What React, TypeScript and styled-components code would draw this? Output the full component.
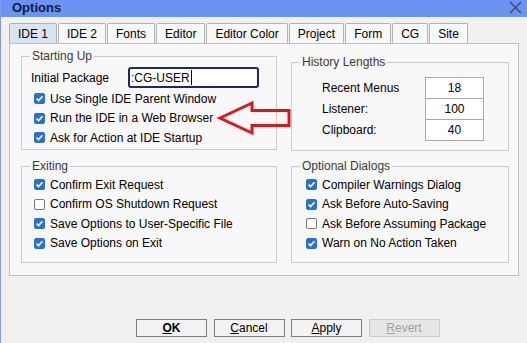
import React from "react";
import styled, { createGlobalStyle } from "styled-components";

const GlobalStyle = createGlobalStyle`
  html, body { margin: 0; padding: 0; background: #f0f0f0; }
  body { font-family: "Liberation Sans", Arial, sans-serif; font-size: 12px; color: #000; }
  * { box-sizing: border-box; }
`;

const Window = styled.div`
  position: relative;
  width: 527px;
  height: 343px;
  border-left: 1px solid #7d9cf0;
  background: #f0f0f0;
  display: flex;
  flex-direction: column;
  overflow: hidden;
`;

const TitleBar = styled.div`
  height: 17px;
  background: #6c93f1;
  display: flex;
  align-items: center;
  padding: 0 5px 0 11px;
`;

const Title = styled.span`
  font-weight: bold;
  font-size: 13px;
  color: #101d3c;
  line-height: 17px;
  margin-top: -3px;
`;

const CloseIcon = styled.svg`
  margin-left: auto;
  margin-top: -3px;
`;

const Body = styled.div`
  padding: 6px 0 0 8px;
`;

const TabBar = styled.div`
  display: flex;
  gap: 1px;
  height: 20px;
`;

const Tab = styled.div<{ $active?: boolean }>`
  height: 20px;
  padding: 0 8px;
  border: 1px solid #b3b3b3;
  border-bottom: none;
  border-radius: 2px 2px 0 0;
  background: ${(p) => (p.$active ? "#d7e4f1" : "#f8f8f8")};
  display: flex;
  align-items: center;
  justify-content: center;
  line-height: 14px;
  white-space: nowrap;
`;

const Panel = styled.div`
  width: 510px;
  height: 233px;
  border: 1px solid #c2c2c2;
  background: #f8f8f8;
  padding: 5px 0 0 11px;
  display: grid;
  grid-template-columns: 256px 218px;
  grid-template-rows: 102px auto;
  column-gap: 14px;
  row-gap: 8px;
  align-items: start;
`;

const Group = styled.fieldset<{ $offset?: number }>`
  margin: ${(p) => p.$offset ?? 0}px 0 0 0;
  padding: 0;
  border: 1px solid #c9ccd2;
  min-width: 0;
`;

const Legend = styled.legend`
  margin-left: 8px;
  padding: 0 2px;
  line-height: 14px;
  font-size: 12px;
  color: #3a3a3a;
`;

const GroupContent = styled.div<{ $pt: number; $pb: number; $pl: number }>`
  padding: ${(p) => `${p.$pt}px 0 ${p.$pb}px ${p.$pl}px`};
  display: flex;
  flex-direction: column;
`;

const InputRow = styled.div`
  height: 23px;
  display: flex;
  align-items: center;
  margin-left: -3px;
`;

const FieldLabel = styled.span`
  width: 97px;
  white-space: nowrap;
`;

const TextBox = styled.div`
  width: 131px;
  height: 21px;
  border: 2px solid #1c2868;
  border-radius: 3px;
  background: #fff;
  display: flex;
  align-items: center;
  padding-left: 1px;
  line-height: 14px;
`;

const Caret = styled.span`
  display: inline-block;
  width: 1px;
  height: 15px;
  background: #000;
  margin-left: 1px;
`;

const CheckRow = styled.label`
  height: 19.5px;
  display: flex;
  align-items: center;
  white-space: nowrap;
  line-height: 14px;
`;

const Box = styled.span<{ $checked: boolean }>`
  width: 11px;
  height: 11px;
  border-radius: 2px;
  margin-right: 5px;
  flex: none;
  display: flex;
  align-items: center;
  justify-content: center;
  background: ${(p) => (p.$checked ? "#2a6fd6" : "#ffffff")};
  border: 1px solid ${(p) => (p.$checked ? "#2a6fd6" : "#7a7a7a")};
`;

const HistoryGrid = styled.div`
  display: grid;
  grid-template-columns: 103px 59px;
  grid-auto-rows: 21px;
`;

const HistLabel = styled.span`
  align-self: center;
  white-space: nowrap;
  line-height: 14px;
`;

const ValueCell = styled.div`
  height: 22px;
  border: 1px solid #a9a9a9;
  background: #fff;
  display: flex;
  align-items: center;
  justify-content: center;
  line-height: 14px;
`;

const ButtonRow = styled.div`
  display: flex;
  gap: 6.5px;
  margin-top: 43px;
  padding-left: 135px;
`;

const Button = styled.div<{ $disabled?: boolean; $default?: boolean }>`
  width: 71px;
  height: 18px;
  border: 1px solid ${(p) => (p.$disabled ? "#cbcbcb" : "#7f7f7f")};
  background: ${(p) => (p.$disabled ? "#e6e6e6" : "#f3f3f3")};
  color: ${(p) => (p.$disabled ? "#a0a0a0" : "#000")};
  font-weight: ${(p) => (p.$default ? "bold" : "normal")};
  display: flex;
  align-items: center;
  justify-content: center;
  line-height: 14px;
  u { text-decoration-thickness: 1px; text-underline-offset: 1px; }
`;

const ArrowSvg = styled.svg`
  position: absolute;
  left: 213px;
  top: 98px;
`;

const Check = ({ checked, label }: { checked: boolean; label: string }) => (
  <CheckRow>
    <Box $checked={checked}>
      {checked && (
        <svg width="9" height="9" viewBox="0 0 9 9">
          <path d="M1.6 4.6 L3.6 6.6 L7.5 2.2" fill="none" stroke="#fff" strokeWidth="1.6" />
        </svg>
      )}
    </Box>
    {label}
  </CheckRow>
);

const tabs = ["IDE 1", "IDE 2", "Fonts", "Editor", "Editor Color", "Project", "Form", "CG", "Site"];

const history = [
  { label: "Recent Menus", value: "18" },
  { label: "Listener:", value: "100" },
  { label: "Clipboard:", value: "40" },
];

export default function App() {
  return (
    <>
      <GlobalStyle />
      <Window>
        <TitleBar>
          <Title>Options</Title>
          <CloseIcon width="13" height="13" viewBox="0 0 13 13">
            <path d="M1 1 L12 12 M12 1 L1 12" stroke="#3b4662" strokeWidth="1.4" fill="none" />
          </CloseIcon>
        </TitleBar>
        <Body>
          <TabBar>
            {tabs.map((t, i) => (
              <Tab key={t} $active={i === 0}>
                {t}
              </Tab>
            ))}
          </TabBar>
          <Panel>
            <Group>
              <Legend>Starting Up</Legend>
              <GroupContent $pt={3} $pb={1} $pl={12}>
                <InputRow>
                  <FieldLabel>Initial Package</FieldLabel>
                  <TextBox>
                    :CG-USER
                    <Caret />
                  </TextBox>
                </InputRow>
                <Check checked label="Use Single IDE Parent Window" />
                <Check checked label="Run the IDE in a Web Browser" />
                <Check checked label="Ask for Action at IDE Startup" />
              </GroupContent>
            </Group>
            <Group $offset={6}>
              <Legend>History Lengths</Legend>
              <GroupContent $pt={8} $pb={10} $pl={30}>
                <HistoryGrid>
                  {history.map((h) => (
                    <React.Fragment key={h.label}>
                      <HistLabel>{h.label}</HistLabel>
                      <ValueCell>{h.value}</ValueCell>
                    </React.Fragment>
                  ))}
                </HistoryGrid>
              </GroupContent>
            </Group>
            <Group>
              <Legend>Exiting</Legend>
              <GroupContent $pt={2} $pb={9} $pl={12}>
                <Check checked label="Confirm Exit Request" />
                <Check checked={false} label="Confirm OS Shutdown Request" />
                <Check checked label="Save Options to User-Specific File" />
                <Check checked label="Save Options on Exit" />
              </GroupContent>
            </Group>
            <Group>
              <Legend>Optional Dialogs</Legend>
              <GroupContent $pt={2} $pb={9} $pl={14}>
                <Check checked label="Compiler Warnings Dialog" />
                <Check checked label="Ask Before Auto-Saving" />
                <Check checked={false} label="Ask Before Assuming Package" />
                <Check checked label="Warn on No Action Taken" />
              </GroupContent>
            </Group>
          </Panel>
        </Body>
        <ButtonRow>
          <Button $default>
            <u>O</u>K
          </Button>
          <Button>
            <u>C</u>ancel
          </Button>
          <Button>
            <u>A</u>pply
          </Button>
          <Button $disabled>
            <u>R</u>evert
          </Button>
        </ButtonRow>
        <ArrowSvg width="80" height="40" viewBox="0 0 80 40">
          <path
            d="M6 20 L38 5 L38 12.5 L75 12.5 L75 27.5 L38 27.5 L38 35 Z"
            fill="none"
            stroke="#e3141b"
            strokeWidth="3"
            strokeLinejoin="miter"
          />
        </ArrowSvg>
      </Window>
    </>
  );
}
